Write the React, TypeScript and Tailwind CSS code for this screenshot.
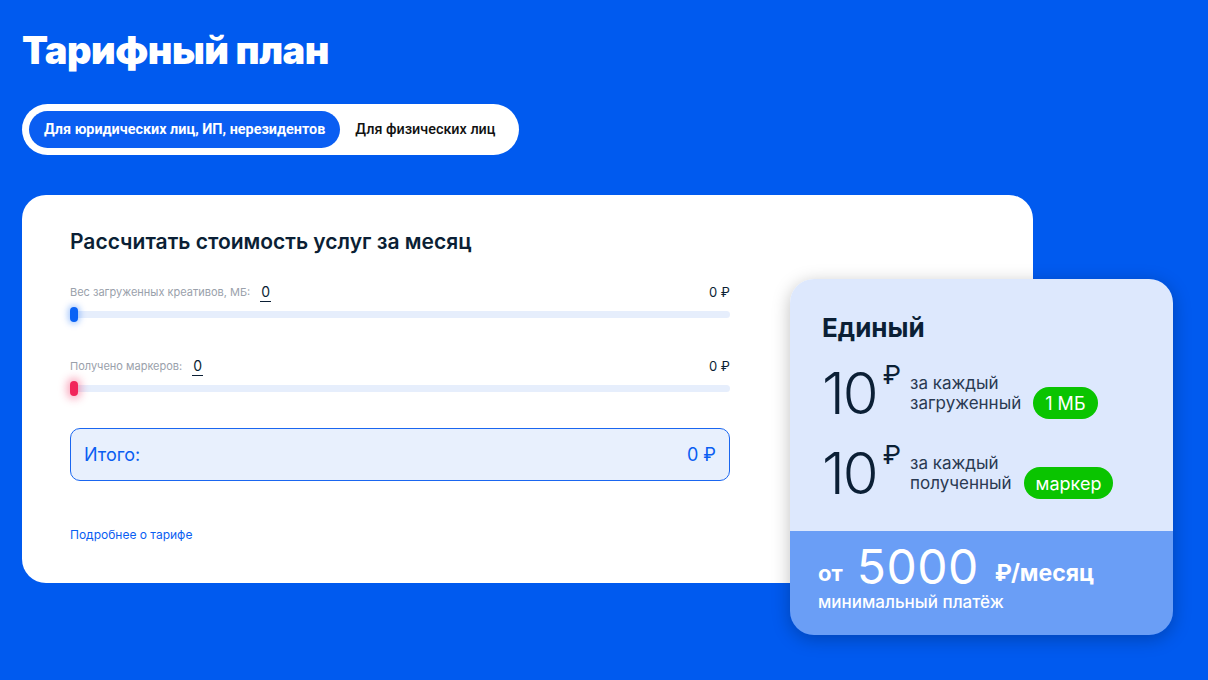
import { useState } from "react";

function Slider({ label, thumb }: { label: string; thumb: "blue" | "red" }) {
  return (
    <div>
      <div className="flex items-end justify-between h-[18px]">
        <div className="flex items-end gap-[10px]">
          <span className="text-[11px] text-[#9aa1ab] leading-none pb-[4px]">{label}</span>
          <span className="text-[14px] text-[#0b1f35] leading-none border-b border-[#0b1f35] px-[1px] pb-[2px]">0</span>
        </div>
        <span className="text-[13px] text-[#0b1f35] leading-none pb-[3px]">0 ₽</span>
      </div>
      <div className="relative mt-[9px] h-[7px] rounded-full bg-[#e6eefc]">
        <span
          className={`absolute left-0 top-[-4px] w-[8px] h-[15px] rounded-full ${
            thumb === "blue"
              ? "bg-[#0a63f5] shadow-[0_0_6px_2px_rgba(10,99,245,0.35)]"
              : "bg-[#f1255a] shadow-[0_0_8px_3px_rgba(241,37,90,0.4)]"
          }`}
        />
      </div>
    </div>
  );
}

function Rate({ text1, text2, tag }: { text1: string; text2: string; tag: string }) {
  return (
    <div className="flex items-center">
      <div className="flex items-start w-[88px]">
        <span className="text-[58px] font-light leading-none tracking-[-2px] text-[#0b1f35]">10</span>
        <span className="text-[26px] font-normal leading-none text-[#0b1f35] ml-[6px] mt-[-2px]">₽</span>
      </div>
      <div className="flex items-end gap-[12px]">
        <div className="text-[17px] leading-[20px] text-[#2a3a52]">
          <div>{text1}</div>
          <div>{text2}</div>
        </div>
        <span className="mb-[-6px] px-[12px] h-[32px] flex items-center rounded-full bg-[#0ac400] text-white text-[18px]">
          {tag}
        </span>
      </div>
    </div>
  );
}

export default function App() {
  const [tab, setTab] = useState<"legal" | "person">("legal");
  return (
    <div className="w-[1208px] h-[680px] bg-[#005aef] overflow-hidden font-['Inter','Noto_Sans',sans-serif] px-[22px] pt-[27px]">
      <h1 className="text-[38px] font-black text-white leading-[46px] tracking-[-0.5px]">Тарифный план</h1>

      <div className="mt-[31px] inline-flex items-center bg-white rounded-full p-[7px] pr-[8px] font-['Roboto',sans-serif]">
        {([
          ["legal", "Для юридических лиц, ИП, нерезидентов"],
          ["person", "Для физических лиц"],
        ] as const).map(([k, t]) => (
          <button
            key={k}
            onClick={() => setTab(k)}
            className={`h-[37px] rounded-full text-[14.4px] px-[15px] ${
              tab === k ? "bg-[#0a5ef2] text-white font-bold" : "text-[#111] font-medium"
            }`}
          >
            {t}
          </button>
        ))}
      </div>

      <div className="flex mt-[40px]">
        <div className="w-[1011px] h-[388px] shrink-0 bg-white rounded-[24px] pl-[48px] pt-[34px]">
          <div className="w-[660px]">
            <h2 className="text-[21px] font-semibold text-[#0b1f35] leading-[26px]">
              Рассчитать стоимость услуг за месяц
            </h2>
            <div className="mt-[29px]">
              <Slider label="Вес загруженных креативов, МБ:" thumb="blue" />
            </div>
            <div className="mt-[40px]">
              <Slider label="Получено маркеров:" thumb="red" />
            </div>
            <div className="mt-[36px] h-[53px] rounded-[10px] border border-[#1a66f0] bg-[#e8f0fd] flex items-center justify-between px-[13px] text-[#0a5ef2] text-[18px]">
              <span>Итого:</span>
              <span>0 ₽</span>
            </div>
            <a className="block mt-[45px] text-[12px] text-[#0a5ef2]">Подробнее о тарифе</a>
          </div>
        </div>

        <div className="ml-[-243px] mt-[84px] w-[383px] h-[356px] shrink-0 rounded-[24px] overflow-hidden shadow-[0_4px_18px_rgba(0,0,0,0.25)] flex flex-col">
          <div className="bg-[#dde8fd] flex-1 pl-[32px] pt-[33px]">
            <div className="text-[26px] font-bold text-[#0b1f35] leading-[32px]">Единый</div>
            <div className="mt-[20px]">
              <Rate text1="за каждый" text2="загруженный" tag="1 МБ" />
            </div>
            <div className="mt-[22px]">
              <Rate text1="за каждый" text2="полученный" tag="маркер" />
            </div>
          </div>
          <div className="bg-[#6a9ef6] h-[104px] pl-[28px] pt-[12px] text-white">
            <div className="flex items-end h-[44px]">
              <span className="text-[22px] font-bold leading-[24px] mb-[2px]">от</span>
              <span className="text-[48px] leading-[40px] ml-[14px] tracking-[0.5px]">5000</span>
              <span className="text-[23px] font-bold leading-[24px] ml-[16px] mb-[2px]">₽/месяц</span>
            </div>
            <div className="text-[17px] font-medium leading-[20px] mt-[5px]">минимальный платёж</div>
          </div>
        </div>
      </div>
    </div>
  );
}
